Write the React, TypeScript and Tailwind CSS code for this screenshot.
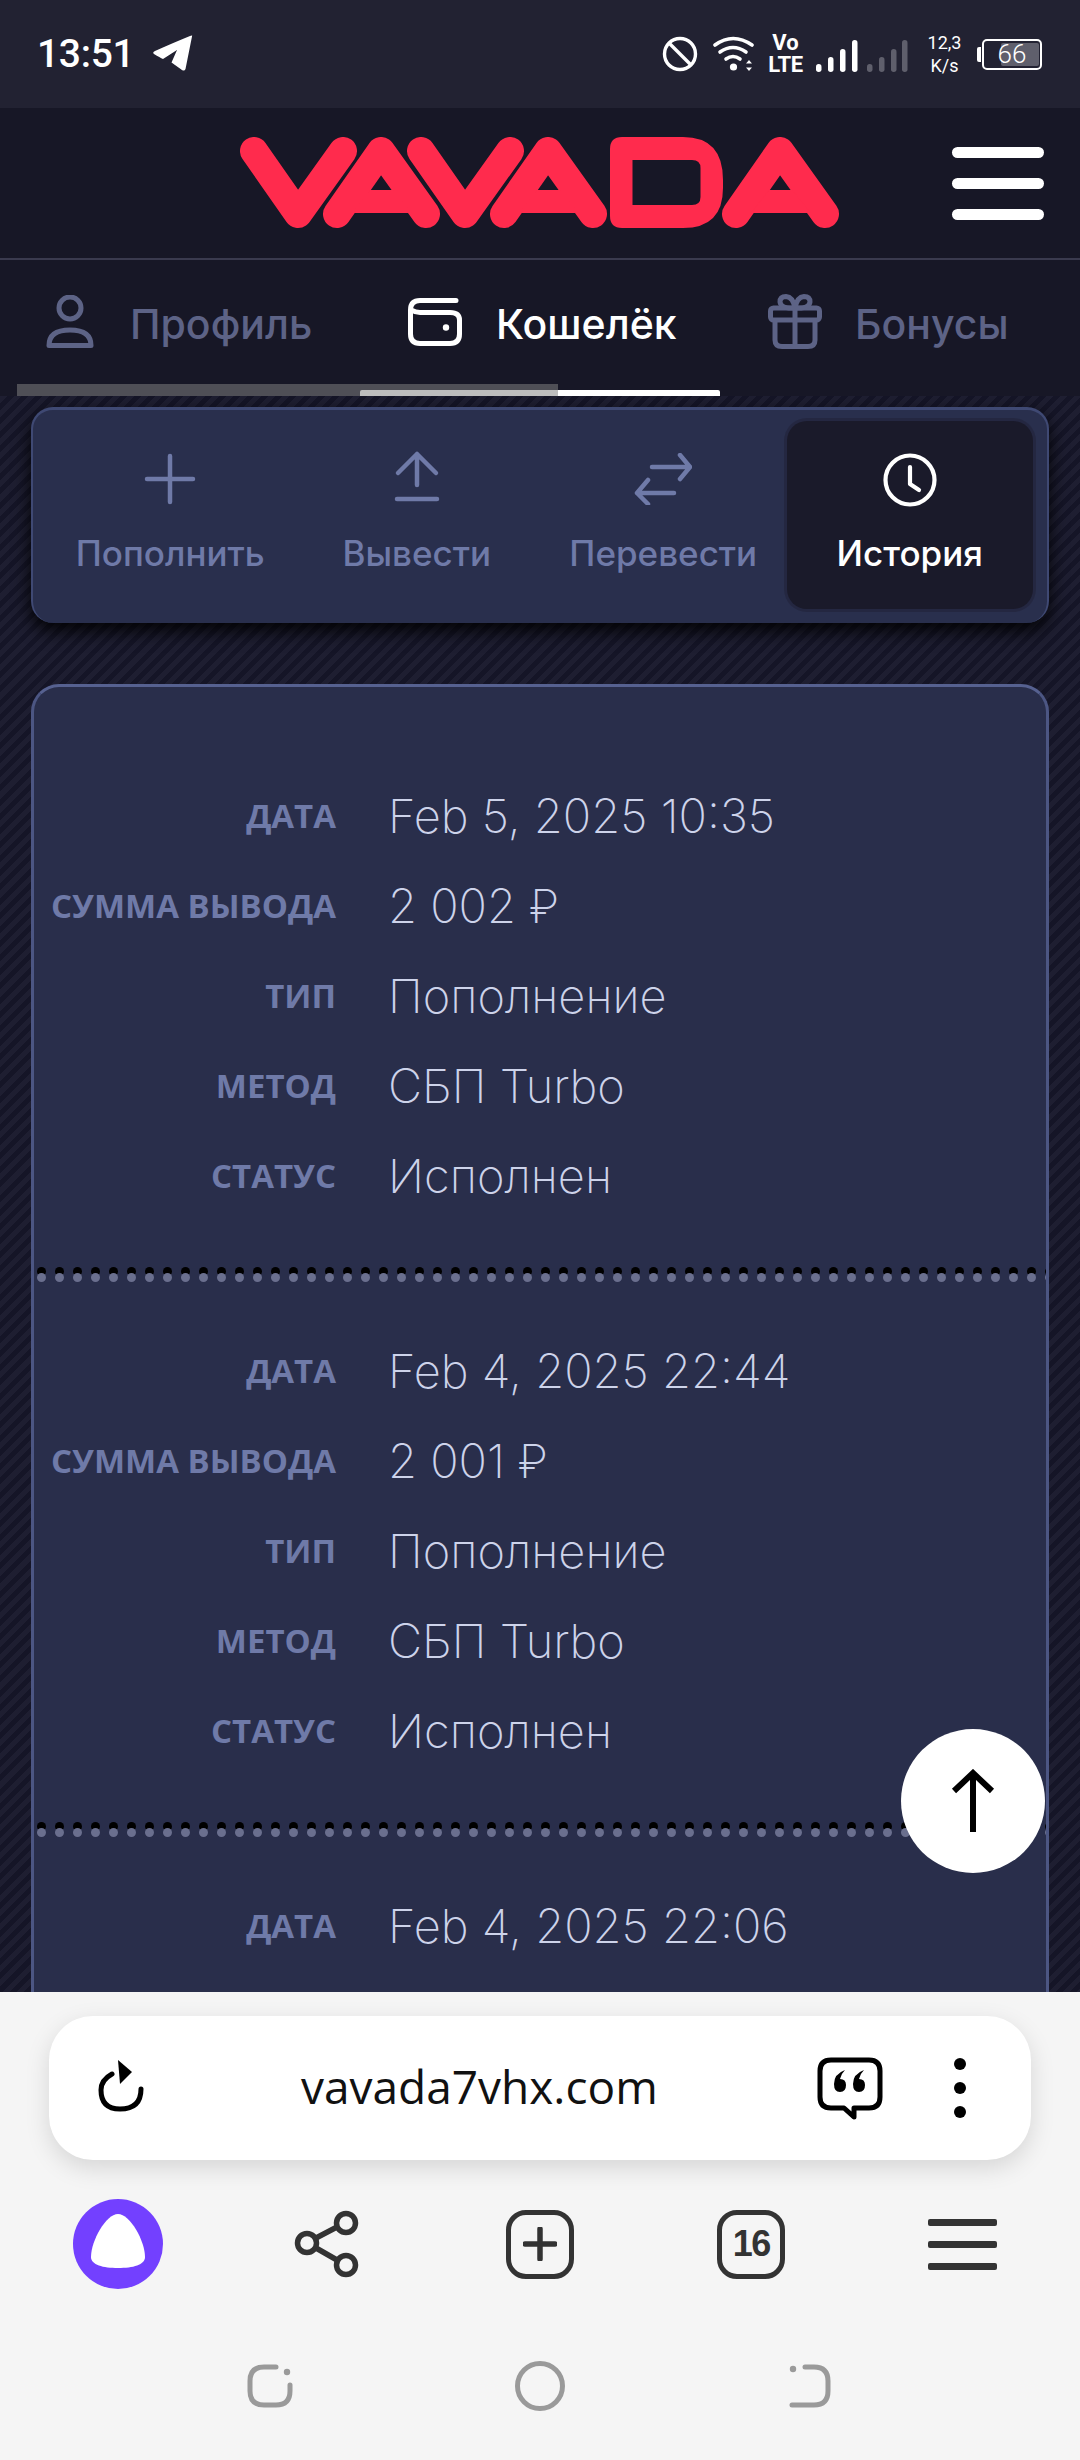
import React from "react";

const entries = [
  { date: "Feb 5, 2025 10:35", sum: "2 002 ₽" },
  { date: "Feb 4, 2025 22:44", sum: "2 001 ₽" },
];

function Logo() {
  const a = (l: number, t: number, r: number) => (
    <g key={t}>
      <path d={`M${l} 214 L${t} 151 L${r} 214`} fill="none" stroke="#ff2b4d" strokeWidth="28" strokeLinecap="round" strokeLinejoin="round" />
      <path d={`M${t - 11} 190 H${t + 12} L${t + 31} 213 H${t - 29} Z`} fill="#ff2b4d" />
    </g>
  );
  const v = (l: number, b: number, r: number) => (
    <path key={b} d={`M${l} 151 L${b} 214 L${r} 151`} fill="none" stroke="#ff2b4d" strokeWidth="28" strokeLinecap="round" strokeLinejoin="round" />
  );
  return (
    <svg width="600" height="92" viewBox="240 137 600 92" className="block">
      {v(254, 298, 343)}
      {a(337, 381, 426)}
      {v(421, 465, 510)}
      {a(504, 548, 593)}
      <path
        fillRule="evenodd"
        fill="#ff2b4d"
        d="M622 137 H683 Q723 137 723 180 V188 Q723 228 683 228 H622 Q610 228 610 216 V149 Q610 137 622 137 Z M632.5 160 V205 H692 Q700.5 205 700.5 197 V168 Q700.5 160 692 160 Z"
      />
      {a(736, 780, 825)}
    </svg>
  );
}

function StatusBar() {
  return (
    <div className="h-[108px] bg-[#222232] flex items-center text-white font-['Roboto',sans-serif] shrink-0">
      <span className="ml-[37px] text-[39px] leading-none font-medium tracking-[-0.3px]">13:51</span>
      <svg width="42" height="37" viewBox="0 0 42 37" className="ml-[18px] mb-[1px]">
        <path d="M40 1.5 L33.5 34 Q32.5 36.5 30 35 L19.5 27.5 L25 15 L11 24 Q8 22.5 2 19 Q0 17.5 3 16 Q22 7.5 38 1 Q41 0 40 1.5 Z" fill="#fff" />
      </svg>
      <div className="ml-auto flex items-center pr-[38px]">
        <svg width="36" height="36" viewBox="0 0 36 36">
          <circle cx="18" cy="18" r="15.5" fill="none" stroke="#fff" strokeWidth="3.4" />
          <path d="M7 7 L29 29" stroke="#fff" strokeWidth="3.4" />
        </svg>
        <svg width="42" height="36" viewBox="0 0 42 36" className="ml-[15px]">
          <g fill="none" stroke="#fff" strokeWidth="3.6" strokeLinecap="round">
            <path d="M2 9 Q20 -4 39 9" />
            <path d="M7 16 Q20 7 33 16" />
            <path d="M13 23 Q20 18 27 23" />
          </g>
          <circle cx="20.5" cy="31" r="3.6" fill="#fff" />
          <path d="M36 24 L39 27.5 H33 Z M36 35 L39 31.5 H33 Z" fill="#fff" />
        </svg>
        <div className="ml-[12px] flex flex-col items-center w-[37px] font-bold">
          <span className="text-[22px] leading-[22px]">Vo</span>
          <span className="text-[22px] leading-[22px] tracking-[-0.4px]">LTE</span>
        </div>
        <svg width="92" height="33" viewBox="0 0 92 33" className="ml-[12px] mt-[4px]">
          <g fill="#fff">
            <rect x="0" y="24" width="5.5" height="8" rx="2.7" />
            <rect x="12" y="17" width="5.5" height="15" rx="2.7" />
            <rect x="24" y="9" width="5.5" height="23" rx="2.7" />
            <rect x="36" y="0" width="5.5" height="32" rx="2.7" />
          </g>
          <g fill="#5f5f6c">
            <rect x="51" y="24" width="5.5" height="8" rx="2.7" />
            <rect x="63" y="17" width="5.5" height="15" rx="2.7" />
            <rect x="75" y="9" width="5.5" height="23" rx="2.7" />
            <rect x="86" y="0" width="5.5" height="32" rx="2.7" />
          </g>
        </svg>
        <div className="ml-[18px] flex flex-col items-center w-[37px] text-[18px] leading-[23px] font-normal">
          <span>12,3</span>
          <span>K/s</span>
        </div>
        <div className="ml-[14px] flex items-center">
          <div className="w-[4px] h-[15px] bg-white rounded-l-[2px] mr-[1px]" />
          <div className="relative w-[60px] h-[31px] border-[2.5px] border-white rounded-[5px] flex items-center justify-center">
            <div className="absolute right-[1px] top-[2px] bottom-[2px] w-[38px] bg-[#5f5f6c] rounded-[2px]" />
            <span className="relative text-[26px] leading-none font-light">66</span>
          </div>
        </div>
      </div>
    </div>
  );
}

function Header() {
  return (
    <div className="h-[152px] bg-[#171726] border-b-[2px] border-[#3a3a4e] flex items-center pl-[240px] pr-[36px] shrink-0">
      <Logo />
      <div className="ml-auto w-[92px] flex flex-col gap-[20px]">
        <div className="h-[11px] rounded-full bg-white" />
        <div className="h-[11px] rounded-full bg-white" />
        <div className="h-[11px] rounded-full bg-white" />
      </div>
    </div>
  );
}

function Tabs() {
  return (
    <div className="relative h-[136px] bg-[#171726] shrink-0 font-['Inter',sans-serif] text-[41px] font-medium">
      <div className="h-[124px] flex items-center pb-[1px]">
        <div className="flex items-center pl-[46px] w-[408px] text-[#5d6386]">
          <svg width="48" height="54" viewBox="0 0 48 54" fill="none" stroke="currentColor" strokeWidth="5">
            <circle cx="24" cy="13" r="11" />
            <path d="M3 50.5 Q3 35 24 35 Q45 35 45 50.5 Z" strokeLinejoin="round" />
          </svg>
          <span className="ml-[36px] relative top-[3px]">Профиль</span>
        </div>
        <div className="flex items-center w-[360px] text-white">
          <svg width="54" height="48" viewBox="0 0 54 48" fill="none" stroke="currentColor" strokeWidth="5" strokeLinecap="round">
            <path d="M48 2.5 H12 Q2.5 2.5 2.5 12 V36 Q2.5 45.5 12 45.5 H42 Q51.5 45.5 51.5 36 V22 Q51.5 14.5 42 14.5 H12 Q8 14.5 3 12" />
            <circle cx="38" cy="29.5" r="3.2" fill="currentColor" stroke="none" />
          </svg>
          <span className="ml-[34px] relative top-[3px]">Кошелёк</span>
        </div>
        <div className="flex items-center text-[#5d6386]">
          <svg width="54" height="55" viewBox="0 0 54 55" fill="none" stroke="currentColor" strokeWidth="5" strokeLinejoin="round">
            <rect x="2.5" y="14" width="49" height="12" rx="3" />
            <path d="M7 26 V46 Q7 52.5 14 52.5 H40 Q47 52.5 47 46 V26" />
            <path d="M27 14 V52" />
            <path d="M27 14 Q13 15 12 8 Q12 2.5 18 2.5 Q25 3 27 14 Q29 3 36 2.5 Q42 2.5 42 8 Q41 15 27 14" />
          </svg>
          <span className="ml-[33px] relative top-[3px]">Бонусы</span>
        </div>
      </div>
      <div className="absolute left-[360px] bottom-0 w-[360px] h-[6px] bg-white rounded-t-[2px]" />
      <div className="absolute left-[17px] bottom-0 w-[541px] h-[12px] bg-[rgba(131,131,131,0.53)]" />
    </div>
  );
}

const S = { fill: "none", stroke: "currentColor", strokeWidth: 4.5, strokeLinecap: "round", strokeLinejoin: "round" } as const;

function Panel() {
  const item = "flex-1 flex flex-col items-center pt-[32px]";
  const label = "mt-[28px] text-[35px] leading-[40px] font-medium whitespace-nowrap";
  return (
    <div className="h-[216px] rounded-[22px] bg-[#292f4d] border-t-[3px] border-x-[2px] border-[#3f4973] p-[14px] pt-[11px] flex font-['Inter',sans-serif] text-[#6f7aa8] shadow-[0_8px_18px_rgba(0,0,0,0.9)]">
      <div className={item}>
        <svg width="52" height="52" viewBox="0 0 52 52" {...S}><path d="M26 3 V49 M3 26 H49" /></svg>
        <span className={label}>Пополнить</span>
      </div>
      <div className={item}>
        <svg width="52" height="52" viewBox="0 0 52 52" {...S} className="overflow-visible"><path d="M26 1 V32 M7 20 L26 1 L45 20 M6 46 H46" /></svg>
        <span className={label}>Вывести</span>
      </div>
      <div className={item}>
        <svg width="58" height="52" viewBox="0 0 58 52" {...S}><path d="M18 14 H56 L46 2 M56 14 L46 26 M40 40 H3 L14 27 M3 40 L14 51" /></svg>
        <span className={label}>Перевести</span>
      </div>
      <div className={item + " bg-[#1a1a2a] rounded-[20px] text-white shadow-[0_0_0_3px_rgba(30,30,50,0.45)]"}>
        <svg width="54" height="54" viewBox="0 0 54 54" fill="none" stroke="currentColor" strokeWidth="4.2" strokeLinecap="round" strokeLinejoin="round">
          <circle cx="27" cy="27" r="24.5" />
          <path d="M27 14 V31 L36 37" />
        </svg>
        <span className="mt-[26px] text-[35px] leading-[40px] font-medium whitespace-nowrap">История</span>
      </div>
    </div>
  );
}

function Row({ k, v }: { k: string; v: string }) {
  return (
    <div className="h-[90px] flex items-center">
      <span className="w-[302px] text-right text-[33px] font-bold text-[#6f7aa8] font-['Open_Sans',sans-serif] leading-none whitespace-nowrap">{k}</span>
      <span className="ml-[52px] text-[47px] font-extralight text-[#cdd3ea] font-['Inter',sans-serif] leading-none whitespace-nowrap">{v}</span>
    </div>
  );
}

function Dotted() {
  return (
    <div className="relative h-[15px] overflow-hidden flex gap-[9px] pl-[3px] items-end">
      {Array.from({ length: 57 }).map((_, i) => (
        <span key={i} className="relative w-[9px] h-[15px] shrink-0">
          <span className="absolute left-0 top-0 w-[9px] h-[9px] rounded-full bg-black" />
          <span className="absolute left-0 top-[6px] w-[9px] h-[9px] rounded-full bg-[#6a6f8e]" />
        </span>
      ))}
    </div>
  );
}

function Card() {
  return (
    <div className="mt-[61px] rounded-t-[28px] bg-[#292e4b] border-[3px] border-b-0 border-[#4c5683] border-t-[#566190] pt-[40px]">
      {entries.map((e) => (
        <div key={e.date}>
          <div className="pt-[43px] pb-[47px]">
            <Row k="ДАТА" v={e.date} />
            <Row k="СУММА ВЫВОДА" v={e.sum} />
            <Row k="ТИП" v="Пополнение" />
            <Row k="МЕТОД" v="СБП Turbo" />
            <Row k="СТАТУС" v="Исполнен" />
          </div>
          <Dotted />
        </div>
      ))}
      <div className="pt-[43px] pb-[60px]">
        <Row k="ДАТА" v="Feb 4, 2025 22:06" />
      </div>
    </div>
  );
}

function UrlBar() {
  return (
    <div className="h-[144px] mx-[49px] mt-[24px] bg-white rounded-[44px] shadow-[0_8px_24px_rgba(0,0,0,0.13)] flex items-center shrink-0 relative">
      <svg width="46" height="52" viewBox="0 0 46 52" className="ml-[49px] mt-[-5px]" fill="none">
        <path d="M14 14 Q3 20 3 30 Q3 49 22 49 Q43 49 43 29" stroke="#000" strokeWidth="5" strokeLinecap="round" />
        <path d="M20 0 L34 12 L22 24 Z" fill="#000" />
      </svg>
      <span className="ml-[157px] mt-[-4px] text-[46px] leading-none text-[#111] font-['Open_Sans',sans-serif]">vavada7vhx.com</span>
      <svg width="66" height="64" viewBox="0 0 66 64" className="ml-auto mt-[2px]">
        <path d="M14 3 H52 Q63 3 63 14 V40 Q63 51 52 51 H37 L37 60 L27 51 H14 Q3 51 3 40 V14 Q3 3 14 3 Z" fill="none" stroke="#000" strokeWidth="5" strokeLinejoin="round" />
        <path d="M28 13 Q17 17 17 27 Q17 35 23 35 Q29 35 29 28 Q29 22 23 22 Q24 17 28 13 Z M47 13 Q36 17 36 27 Q36 35 42 35 Q48 35 48 28 Q48 22 42 22 Q43 17 47 13 Z" fill="#000" />
      </svg>
      <div className="ml-[71px] mr-[65px] flex flex-col gap-[12px]">
        <div className="w-[12px] h-[12px] rounded-full bg-black" />
        <div className="w-[12px] h-[12px] rounded-full bg-black" />
        <div className="w-[12px] h-[12px] rounded-full bg-black" />
      </div>
    </div>
  );
}

function Toolbar() {
  return (
    <div className="mt-[38px] px-[12px] h-[92px] grid grid-cols-5 justify-items-center items-center shrink-0 text-[#333]">
      <svg width="90" height="90" viewBox="0 0 90 90">
        <circle cx="45" cy="45" r="45" fill="#7340ff" />
        <path d="M45 15 C33 15 18 42 18 58 C18 66 30 69 45 69 C60 69 72 66 72 58 C72 42 57 15 45 15 Z" fill="#fff" />
      </svg>
      <svg width="66" height="68" viewBox="0 0 66 68" fill="none" stroke="currentColor" strokeWidth="5.5" className="mr-[4px]">
        <circle cx="52" cy="13" r="9.5" />
        <circle cx="13" cy="33" r="9.5" />
        <circle cx="52" cy="55" r="9.5" />
        <path d="M22 28 L43 17 M22 38 L43 50" />
      </svg>
      <div className="w-[68px] h-[69px] rounded-[20px] border-[5px] border-[#333] flex items-center justify-center">
        <svg width="34" height="34" viewBox="0 0 34 34" fill="none" stroke="currentColor" strokeWidth="5.5" strokeLinecap="round">
          <path d="M17 2 V32 M2 17 H32" />
        </svg>
      </div>
      <div className="w-[68px] h-[69px] rounded-[20px] border-[5px] border-[#333] flex items-center justify-center font-['Liberation_Sans',sans-serif] font-bold text-[36px] tracking-[-1.5px] leading-none">16</div>
      <div className="w-[69px] flex flex-col gap-[15px]">
        <div className="h-[7px] rounded-[2px] bg-[#333]" />
        <div className="h-[7px] rounded-[2px] bg-[#333]" />
        <div className="h-[7px] rounded-[2px] bg-[#333]" />
      </div>
    </div>
  );
}

function NavBar() {
  return (
    <div className="mt-[71px] px-[135px] grid grid-cols-3 justify-items-center items-center h-[50px] shrink-0">
      <svg width="46" height="44" viewBox="0 0 46 44" fill="none" stroke="#9a9a9a" strokeWidth="5" strokeLinecap="round">
        <path d="M29 3 H17 Q3 3 3 17 V27 Q3 41 17 41 H29 Q43 41 43 27 V21" />
        <circle cx="40" cy="8" r="3.2" fill="#9a9a9a" stroke="none" />
      </svg>
      <svg width="50" height="50" viewBox="0 0 50 50" fill="none" stroke="#9a9a9a" strokeWidth="5">
        <circle cx="25" cy="25" r="22.5" />
      </svg>
      <svg width="42" height="44" viewBox="0 0 42 44" fill="none" stroke="#9a9a9a" strokeWidth="5" strokeLinecap="round">
        <path d="M16 3 H25 Q39 3 39 17 V27 Q39 41 25 41 H3" />
        <circle cx="4" cy="5" r="3.2" fill="#9a9a9a" stroke="none" />
      </svg>
    </div>
  );
}

export default function App() {
  return (
    <div className="w-[1080px] h-[2460px] flex flex-col overflow-hidden bg-[#f5f5f5]">
      <StatusBar />
      <Header />
      <Tabs />
      <div className="relative flex-1 min-h-0 overflow-hidden px-[31px] pt-[11px] bg-[repeating-linear-gradient(135deg,#1e1e31_0px,#1e1e31_5px,#151527_5px,#151527_10px)]">
        <Panel />
        <Card />
        <button className="absolute left-[901px] top-[1333px] w-[144px] h-[144px] rounded-full bg-white flex items-center justify-center">
          <svg width="44" height="64" viewBox="0 0 44 64" fill="none" stroke="#000" strokeWidth="6">
            <path d="M22 4 V63 M3 22 L22 4 L41 22" />
          </svg>
        </button>
      </div>
      <div className="h-[468px] bg-[#f5f5f5] shrink-0 flex flex-col">
        <UrlBar />
        <Toolbar />
        <NavBar />
      </div>
    </div>
  );
}
